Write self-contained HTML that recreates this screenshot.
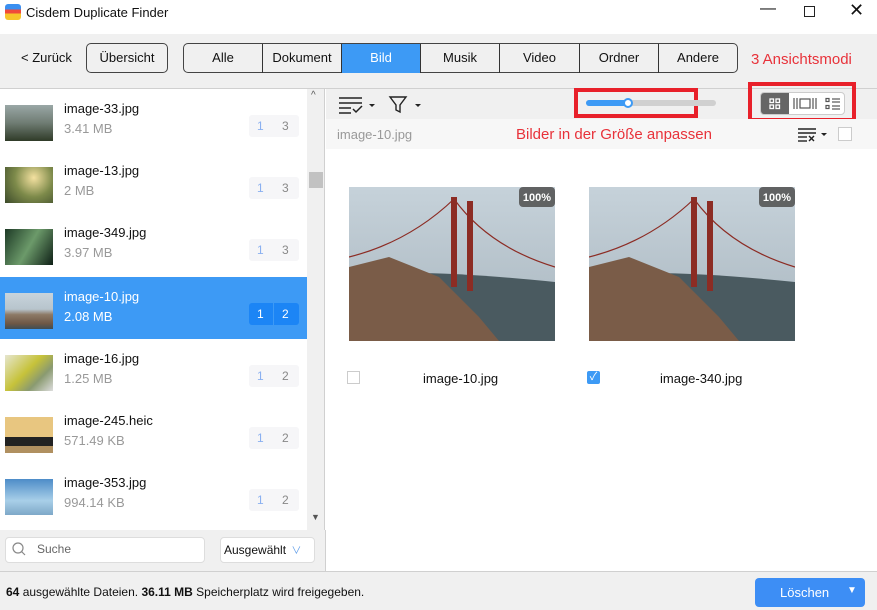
<!DOCTYPE html>
<html><head><meta charset="utf-8"><style>
*{box-sizing:border-box;margin:0;padding:0}
body{width:877px;height:610px;position:relative;overflow:hidden;font-family:"Liberation Sans","Noto Sans CJK SC",sans-serif;font-size:13px;color:#111;background:#fff}
.abs{position:absolute}
.tab{position:absolute;top:44px;height:29px;border-left:1px solid #333;text-align:center;line-height:27px;font-size:13px}
.row{position:absolute;left:0;width:307px;height:62px}
.row .th{position:absolute;left:5px;top:16px;width:48px;height:36px}
.row .n{position:absolute;left:64px;top:12px;font-size:13px}
.row .s{position:absolute;left:64px;top:32px;font-size:13px;color:#999}
.row .b{position:absolute;left:249px;top:26px;width:50px;height:22px;background:#f6f6f8;border-radius:3px;font-size:12px;color:#888}
.row .b span{position:absolute;top:4px}
.bridge{background:linear-gradient(180deg,#c9d4dc 0%,#b7c4cc 45%,#8d7a66 60%,#6e5746 85%,#3f4d55 100%)}
</style></head><body>
<!-- title -->
<div class="abs" style="left:5px;top:4px;width:16px;height:16px;border-radius:3px;background:linear-gradient(180deg,#3a8ff0 0 35%,#f04a3a 35% 60%,#f7c52a 60%)"></div>
<div class="abs" style="left:26px;top:5px;font-size:13px">Cisdem Duplicate Finder</div>
<div class="abs" style="left:760px;top:0;font-size:16px">—</div>
<div class="abs" style="left:804px;top:6px;width:11px;height:11px;border:1.3px solid #222"></div>
<div class="abs" style="left:849px;top:0px;font-size:18px">✕</div>
<!-- toolbar -->
<div class="abs" style="left:0;top:34px;width:877px;height:55px;background:#f0f0f0;border-bottom:1px solid #d0d0d0"></div>
<div class="abs" style="left:21px;top:50px">&lt; Zurück</div>
<div class="abs" style="left:86px;top:43px;width:82px;height:30px;border:1px solid #444;border-radius:5px;text-align:center;line-height:28px">Übersicht</div>
<div class="abs" style="left:183px;top:43px;width:555px;height:30px;border:1px solid #444;border-radius:5px;overflow:hidden"></div>
<div class="tab" style="left:184px;width:78px;border-left:none">Alle</div>
<div class="tab" style="left:262px;width:79px">Dokument</div>
<div class="tab" style="left:341px;width:79px;background:#3d9af5;color:#fff;border-left:1px solid #333">Bild</div>
<div class="tab" style="left:420px;width:79px">Musik</div>
<div class="tab" style="left:499px;width:80px">Video</div>
<div class="tab" style="left:579px;width:79px">Ordner</div>
<div class="tab" style="left:658px;width:79px">Andere</div>
<div class="abs" style="left:751px;top:51px;font-size:15px;color:#e8323a">3 Ansichtsmodi</div>
<!-- left list -->
<div class="row" style="top:89px"><div class="th" style="background:linear-gradient(180deg,#9aa7a6,#6f7c73 50%,#2f3b28)"></div><div class="n">image-33.jpg</div><div class="s">3.41 MB</div><div class="b"><span style="left:8px;color:#8ab0f0">1</span><span style="left:33px">3</span></div></div>
<div class="row" style="top:151px"><div class="th" style="background:radial-gradient(circle at 60% 30%,#f4e1a0,#7d8a4a 50%,#3c4a2a)"></div><div class="n">image-13.jpg</div><div class="s">2 MB</div><div class="b"><span style="left:8px;color:#8ab0f0">1</span><span style="left:33px">3</span></div></div>
<div class="row" style="top:213px"><div class="th" style="background:linear-gradient(120deg,#1d3a26,#6c9a6a 50%,#0e1f16)"></div><div class="n">image-349.jpg</div><div class="s">3.97 MB</div><div class="b"><span style="left:8px;color:#8ab0f0">1</span><span style="left:33px">3</span></div></div>
<div class="row" style="top:277px;background:#3d9af5"><div class="th bridge"></div><div class="n" style="color:#fff">image-10.jpg</div><div class="s" style="color:#fff">2.08 MB</div><div class="b" style="background:#1c85f5;color:#fff"><span style="left:8px">1</span><span style="left:33px">2</span><div class="abs" style="left:24px;top:0;width:1px;height:22px;background:#3d9af5"></div></div></div>
<div class="row" style="top:339px"><div class="th" style="background:linear-gradient(135deg,#e6e6d0,#c6c23a 45%,#8a9a70 70%,#ddd)"></div><div class="n">image-16.jpg</div><div class="s">1.25 MB</div><div class="b"><span style="left:8px;color:#8ab0f0">1</span><span style="left:33px">2</span></div></div>
<div class="row" style="top:401px"><div class="th" style="background:linear-gradient(180deg,#e8c680 0 55%,#222 55% 80%,#b09060 80%)"></div><div class="n">image-245.heic</div><div class="s">571.49 KB</div><div class="b"><span style="left:8px;color:#8ab0f0">1</span><span style="left:33px">2</span></div></div>
<div class="row" style="top:463px"><div class="th" style="background:linear-gradient(180deg,#4d8cc8,#a8cfe8 60%,#7ea8c8)"></div><div class="n">image-353.jpg</div><div class="s">994.14 KB</div><div class="b"><span style="left:8px;color:#8ab0f0">1</span><span style="left:33px">2</span></div></div>
<!-- scrollbar -->
<div class="abs" style="left:307px;top:89px;width:18px;height:441px;background:#f0f0f0;border-right:1px solid #d0d0d0"></div>
<div class="abs" style="left:311px;top:90px;font-size:10px;color:#555">^</div>
<div class="abs" style="left:309px;top:172px;width:14px;height:16px;background:#c2c2c2"></div>
<div class="abs" style="left:311px;top:512px;font-size:9px;color:#555">▼</div>
<!-- search area -->
<div class="abs" style="left:0;top:530px;width:326px;height:41px;background:#f0f0f0;border-right:1px solid #d0d0d0"></div>
<div class="abs" style="left:5px;top:537px;width:200px;height:26px;background:#fff;border:1px solid #ddd;border-radius:4px"></div>
<svg class="abs" style="left:11px;top:541px" width="16" height="16"><circle cx="7" cy="7" r="5" fill="none" stroke="#888" stroke-width="1.2"/><line x1="10.5" y1="10.5" x2="14" y2="14" stroke="#888" stroke-width="1.2"/></svg>
<div class="abs" style="left:37px;top:542px;color:#666;font-size:12px">Suche</div>
<div class="abs" style="left:220px;top:537px;width:95px;height:26px;background:#fff;border:1px solid #ddd;border-radius:4px;font-size:12px;line-height:24px;padding-left:3px">Ausgewählt <span style="color:#5b9ae8;font-size:10px;margin-left:2px">∨</span></div>
<!-- right toolbar -->
<div class="abs" style="left:326px;top:89px;width:551px;height:30px;background:#f0f0f0"></div>
<svg class="abs" style="left:338px;top:95px" width="40" height="20"><g stroke="#222" stroke-width="1.5"><line x1="1" y1="3" x2="24" y2="3"/><line x1="1" y1="8" x2="24" y2="8"/><line x1="1" y1="13" x2="13" y2="13"/><line x1="1" y1="18" x2="13" y2="18"/><polyline points="15,14 18,17 24,11" fill="none"/></g><path d="M31 9h6l-3 3z" fill="#222"/></svg>
<svg class="abs" style="left:388px;top:95px" width="36" height="20"><path d="M2 2h16l-6 8v7l-4-2v-5z" fill="none" stroke="#222" stroke-width="1.4"/><path d="M27 9h6l-3 3z" fill="#222"/></svg>
<div class="abs" style="left:574px;top:88px;width:124px;height:30px;border:4px solid #e8202a"></div>
<div class="abs" style="left:586px;top:100px;width:130px;height:6px;background:#d0d0d0;border-radius:3px"></div>
<div class="abs" style="left:586px;top:100px;width:42px;height:6px;background:#3d9af5;border-radius:3px"></div>
<div class="abs" style="left:623px;top:98px;width:10px;height:10px;background:#fff;border:2px solid #3d9af5;border-radius:50%"></div>
<div class="abs" style="left:748px;top:82px;width:108px;height:40px;border:4px solid #e8202a"></div>
<div class="abs" style="left:760px;top:92px;width:85px;height:23px;border:1px solid #ccc;border-radius:4px;background:#fff;overflow:hidden"><div style="width:28px;height:23px;background:#666"></div></div>
<svg class="abs" style="left:768px;top:97px" width="14" height="14"><g fill="none" stroke="#fff" stroke-width="1.3"><rect x="2" y="2" width="3.5" height="3.5"/><rect x="8" y="2" width="3.5" height="3.5"/><rect x="2" y="8" width="3.5" height="3.5"/><rect x="8" y="8" width="3.5" height="3.5"/></g></svg>
<svg class="abs" style="left:793px;top:97px" width="24" height="14"><g stroke="#555" stroke-width="1.2" fill="none"><line x1="1" y1="1" x2="1" y2="12"/><line x1="4" y1="1" x2="4" y2="12"/><rect x="7" y="2" width="10" height="9"/><line x1="20" y1="1" x2="20" y2="12"/><line x1="23" y1="1" x2="23" y2="12"/></g></svg>
<svg class="abs" style="left:825px;top:97px" width="16" height="14"><g stroke="#555" stroke-width="1.2" fill="none"><rect x="1" y="1.5" width="3" height="3"/><rect x="1" y="8.5" width="3" height="3"/><line x1="7" y1="2" x2="15" y2="2"/><line x1="7" y1="5" x2="15" y2="5"/><line x1="7" y1="9" x2="15" y2="9"/><line x1="7" y1="12" x2="15" y2="12"/></g></svg>
<div class="abs" style="left:326px;top:119px;width:551px;height:30px;background:#f7f7f7"></div>
<div class="abs" style="left:337px;top:127px;color:#999">image-10.jpg</div>
<div class="abs" style="left:516px;top:126px;font-size:15px;color:#e8323a">Bilder in der Größe anpassen</div>
<svg class="abs" style="left:797px;top:127px" width="32" height="16"><g stroke="#222" stroke-width="1.4"><line x1="1" y1="2" x2="19" y2="2"/><line x1="1" y1="6" x2="19" y2="6"/><line x1="1" y1="10" x2="10" y2="10"/><line x1="1" y1="14" x2="10" y2="14"/><line x1="12" y1="9" x2="17" y2="14"/><line x1="17" y1="9" x2="12" y2="14"/></g><path d="M24 6h6l-3 3z" fill="#222"/></svg>
<div class="abs" style="left:838px;top:127px;width:14px;height:14px;border:1px solid #ccc;background:#fff"></div>
<!-- images -->
<svg class="abs" style="left:349px;top:187px" width="206" height="154"><defs><linearGradient id="sk" x1="0" y1="0" x2="0" y2="1"><stop offset="0" stop-color="#c6d2da"/><stop offset="1" stop-color="#a9b6bf"/></linearGradient></defs><rect width="206" height="154" fill="url(#sk)"/><path d="M0 90 Q60 80 206 95 L206 154 L0 154Z" fill="#4a5a60"/><path d="M0 80 L40 70 L90 90 L130 130 L150 154 L0 154Z" fill="#7a5c48"/><rect x="102" y="10" width="6" height="90" fill="#8c2c24"/><rect x="118" y="14" width="6" height="90" fill="#8c2c24"/><path d="M0 70 Q60 55 105 12 Q140 60 206 80" fill="none" stroke="#8c2c24" stroke-width="1.2"/><rect x="170" y="0" width="36" height="20" rx="4" fill="#555" opacity=".9"/><text x="188" y="14" fill="#fff" font-size="11" font-weight="bold" text-anchor="middle" font-family="Liberation Sans">100%</text></svg>
<svg class="abs" style="left:589px;top:187px" width="206" height="154"><rect width="206" height="154" fill="url(#sk)"/><path d="M0 90 Q60 80 206 95 L206 154 L0 154Z" fill="#4a5a60"/><path d="M0 80 L40 70 L90 90 L130 130 L150 154 L0 154Z" fill="#7a5c48"/><rect x="102" y="10" width="6" height="90" fill="#8c2c24"/><rect x="118" y="14" width="6" height="90" fill="#8c2c24"/><path d="M0 70 Q60 55 105 12 Q140 60 206 80" fill="none" stroke="#8c2c24" stroke-width="1.2"/><rect x="170" y="0" width="36" height="20" rx="4" fill="#555" opacity=".9"/><text x="188" y="14" fill="#fff" font-size="11" font-weight="bold" text-anchor="middle" font-family="Liberation Sans">100%</text></svg>
<div class="abs" style="left:347px;top:371px;width:13px;height:13px;border:1px solid #ccc"></div>
<div class="abs" style="left:423px;top:371px">image-10.jpg</div>
<div class="abs" style="left:587px;top:371px;width:13px;height:13px;background:#3d9af5;border-radius:2px;color:#fff;font-size:11px;line-height:13px;text-align:center">✓</div>
<div class="abs" style="left:660px;top:371px">image-340.jpg</div>
<!-- status -->
<div class="abs" style="left:0;top:571px;width:877px;height:39px;background:#f0f0f0;border-top:1px solid #d0d0d0"></div>
<div class="abs" style="left:6px;top:585px;font-size:12px"><b>64</b> ausgewählte Dateien. <b>36.11 MB</b> Speicherplatz wird freigegeben.</div>
<div class="abs" style="left:755px;top:578px;width:110px;height:29px;background:#3d8ef5;border-radius:4px;color:#fff"><span class="abs" style="left:25px;top:7px">Löschen</span><span class="abs" style="left:92px;top:7px;font-size:10px">▼</span></div>
</body></html>
